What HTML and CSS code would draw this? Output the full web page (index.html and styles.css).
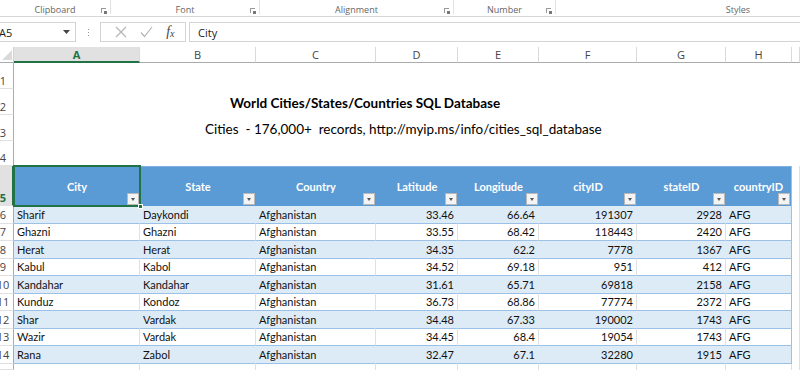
FILE: index.html
```html
<!DOCTYPE html>
<html lang="en">
<head>
  <meta charset="UTF-8" />
  <title>Cities SQL Database</title>
  <link rel="stylesheet" href="styles.css">
</head>
<body>
  <!-- Ribbon group labels -->
  <div class="ribbon">
    <div class="group g-clip"><span class="label">Clipboard</span><span class="launcher"></span></div>
    <div class="group g-font"><span class="label">Font</span><span class="launcher"></span></div>
    <div class="group g-align"><span class="label">Alignment</span><span class="launcher"></span></div>
    <div class="group g-num"><span class="label">Number</span><span class="launcher"></span></div>
    <div class="group g-styles"><span class="label">Styles</span></div>
  </div>

  <!-- Formula bar -->
  <div class="formula-bar">
    <div class="name-box">
      <span>A5</span>
      <svg class="caret" width="7" height="4" viewBox="0 0 7 4"><path d="M0 0h7L3.5 4z" fill="#444"/></svg>
    </div>
    <div class="grip"><i></i><i></i><i></i></div>
    <div class="fx-box">
      <svg width="12" height="12" viewBox="0 0 12 12"><path d="M1 1l10 10M11 1L1 11" stroke="#b5b5b5" stroke-width="1.2" fill="none"/></svg>
      <svg width="13" height="12" viewBox="0 0 13 12"><path d="M1 6.5l3.5 4L12 1" stroke="#b5b5b5" stroke-width="1.2" fill="none"/></svg>
      <span class="fx">f<sub>x</sub></span>
    </div>
    <div class="formula-input">City</div>
  </div>

  <!-- Worksheet -->
  <div class="sheet" id="sheet">
    <div class="corner"><svg width="10" height="10" viewBox="0 0 10 10"><path d="M10 0v10H0z" fill="#dadada"/></svg></div>
    <div class="ch active">A</div>
    <div class="ch">B</div>
    <div class="ch">C</div>
    <div class="ch">D</div>
    <div class="ch">E</div>
    <div class="ch">F</div>
    <div class="ch">G</div>
    <div class="ch">H</div>
    <div class="ch"></div>

    <div class="rh top"><span>1</span></div>
    <div class="blank"></div>
    <div class="rh top"><span>2</span></div>
    <div class="title-cell"><span class="title">World Cities/States/Countries SQL Database</span></div>
    <div class="rh top"><span>3</span></div>
    <div class="sub-cell"><span class="subtitle">Cities&nbsp; - 176,000+&nbsp; records, http://myip.ms/info/cities_sql_database</span></div>
    <div class="rh top"><span>4</span></div>
    <div class="blank"></div>

    <div class="rh top active"><span>5</span></div>
    <div class="th selected">City<i class="filter"></i><b class="handle"></b></div>
    <div class="th">State<i class="filter"></i></div>
    <div class="th">Country<i class="filter"></i></div>
    <div class="th">Latitude<i class="filter"></i></div>
    <div class="th">Longitude<i class="filter"></i></div>
    <div class="th">cityID<i class="filter"></i></div>
    <div class="th">stateID<i class="filter"></i></div>
    <div class="th last">countryID<i class="filter"></i></div>
    <div class="gc"></div>
  </div>

  <script>
    // Rows 6-14 of the cities table
    const cities = [
      ['Sharif', 'Daykondi', 'Afghanistan', '33.46', '66.64', '191307', '2928', 'AFG'],
      ['Ghazni', 'Ghazni', 'Afghanistan', '33.55', '68.42', '118443', '2420', 'AFG'],
      ['Herat', 'Herat', 'Afghanistan', '34.35', '62.2', '7778', '1367', 'AFG'],
      ['Kabul', 'Kabol', 'Afghanistan', '34.52', '69.18', '951', '412', 'AFG'],
      ['Kandahar', 'Kandahar', 'Afghanistan', '31.61', '65.71', '69818', '2158', 'AFG'],
      ['Kunduz', 'Kondoz', 'Afghanistan', '36.73', '68.86', '77774', '2372', 'AFG'],
      ['Shar', 'Vardak', 'Afghanistan', '34.48', '67.33', '190002', '1743', 'AFG'],
      ['Wazir', 'Vardak', 'Afghanistan', '34.45', '68.4', '19054', '1743', 'AFG'],
      ['Rana', 'Zabol', 'Afghanistan', '32.47', '67.1', '32280', '1915', 'AFG']
    ];

    const sheet = document.getElementById('sheet');

    function addCell(cls, text) {
      const div = document.createElement('div');
      div.className = cls;
      div.textContent = text;
      sheet.appendChild(div);
    }

    cities.forEach((row, i) => {
      const band = i % 2 === 0 ? ' band' : '';
      const rh = document.createElement('div');
      rh.className = 'rh';
      rh.innerHTML = '<span>' + (i + 6) + '</span>';
      sheet.appendChild(rh);
      row.forEach((val, c) => {
        let cls = 'td' + band;
        if (c >= 3 && c <= 6) cls += ' num';
        if (c === 7) cls += ' last';
        addCell(cls, val);
      });
      addCell('gc', '');
    });

    // Partial row 15 at the bottom edge
    addCell('rh', '');
    for (let c = 0; c < 9; c++) addCell('gc', '');
  </script>
</body>
</html>
```

FILE: styles.css
```css
* {
  box-sizing: border-box;
  margin: 0;
  padding: 0;
}
body {
  background: #fff;
  width: 800px;
  height: 391px;
  overflow: hidden;
  font-family: 'Lato', 'Liberation Sans', sans-serif;
  color: #000;
}

/* Ribbon */
.ribbon {
  display: flex;
  height: 17px;
  border-bottom: 1px solid #d6d6d6;
  font-family: 'Open Sans', 'Noto Sans', sans-serif;
  font-size: 9px;
  color: #666;
}
.group {
  position: relative;
  display: flex;
  align-items: center;
  justify-content: center;
  border-right: 1px solid #e2e2e2;
  margin: 0 0 2px;
  padding-top: 5px;
}
.g-clip { width: 111px; }
.g-font { width: 149px; }
.g-align { width: 194px; }
.g-num { width: 102px; }
.g-styles { flex: 1; border-right: none; padding-left: 120px; }
.launcher {
  position: absolute;
  right: 4px;
  bottom: 1px;
  width: 5px;
  height: 5px;
  border-left: 1px solid #999;
  border-top: 1px solid #999;
}
.launcher::after {
  content: '';
  position: absolute;
  right: -1px;
  bottom: -1px;
  width: 3px;
  height: 3px;
  background: #777;
}

/* Formula bar */
.formula-bar {
  display: flex;
  align-items: stretch;
  height: 20px;
  margin-top: 5px;
  font-family: 'Open Sans', 'Noto Sans', sans-serif;
  font-size: 11px;
  color: #222;
}
.name-box {
  width: 76px;
  display: flex;
  align-items: center;
  justify-content: space-between;
  padding: 0 5px 0 0;
  border: 1px solid #d4d4d4;
  border-left: none;
}
.name-box span { margin-left: -1px; }
.grip {
  width: 24px;
  display: flex;
  flex-direction: column;
  align-items: center;
  justify-content: center;
  gap: 2px;
}
.grip i {
  display: block;
  width: 1px;
  height: 1px;
  background: #999;
}
.fx-box {
  width: 86px;
  display: flex;
  align-items: center;
  justify-content: space-around;
  padding: 0 4px 0 8px;
  border: 1px solid #d4d4d4;
}
.fx {
  font-family: 'Liberation Serif', serif;
  font-style: italic;
  font-size: 14px;
  color: #444;
}
.fx sub { font-size: 10px; vertical-align: -1px; }
.formula-input {
  flex: 1;
  margin-left: 3px;
  padding-left: 8px;
  display: flex;
  align-items: center;
  border: 1px solid #d4d4d4;
  border-right: none;
}

/* Sheet grid */
.sheet {
  display: grid;
  grid-template-columns: 14px 126px 116px 120px 82px 81px 98px 89px 66px 8px;
  grid-template-rows: 16px 26px 26px 26px 25px 40px repeat(9, 17.5px) 6px;
  margin-top: 5px;
  font-size: 11px;
}
.corner {
  display: flex;
  align-items: flex-end;
  padding: 0 0 2px 2px;
  border-bottom: 1px solid #ababab;
  border-right: 1px solid #d4d4d4;
}
.ch {
  display: flex;
  align-items: center;
  justify-content: center;
  color: #444;
  font-family: 'Open Sans', 'Noto Sans', sans-serif;
  font-size: 11px;
  border-right: 1px solid #dadada;
  border-bottom: 1px solid #ababab;
}
.ch.active {
  background: #e1e1e1;
  color: #217346;
  font-weight: bold;
  border-bottom: 2px solid #217346;
}
.rh {
  overflow: hidden;
  display: flex;
  align-items: center;
  border-right: 1px solid #ababab;
  border-bottom: 1px solid #e0e0e0;
  color: #444;
  font-family: 'Open Sans', 'Noto Sans', sans-serif;
  font-size: 11px;
}
.rh span {
  display: block;
  flex: none;
  width: 22px;
  margin-left: -8px;
  text-align: center;
}
.rh.top { align-items: flex-end; padding-bottom: 0; }
.rh.active {
  background: #e1e1e1;
  color: #217346;
  font-weight: bold;
  border-right: 2px solid #217346;
}
.blank { grid-column: 2 / 11; }
.title-cell,
.sub-cell {
  grid-column: 2 / 11;
  display: flex;
  align-items: center;
  white-space: nowrap;
}
.title-cell { padding: 2px 0 0 216px; }
.sub-cell { padding: 1px 0 0 191px; }
.title {
  font-weight: bold;
  font-size: 13.5px;
}
.subtitle { font-size: 13.5px; }

/* Table header */
.th {
  position: relative;
  display: flex;
  align-items: center;
  justify-content: center;
  padding-bottom: 1px;
  background: #5b9bd5;
  color: #fff;
  font-weight: bold;
  border-top: 1px solid #7eb1e0;
}
.th.last { border-right: 1px solid #9bc2e6; }
.th.selected { outline: 2px solid #217346; outline-offset: -1px; z-index: 1; }
.filter {
  position: absolute;
  right: 1px;
  bottom: 1px;
  width: 12px;
  height: 12px;
  background: #f4f4f4;
  border: 1px solid #b9b9b9;
}
.filter::after {
  content: '';
  position: absolute;
  left: 3px;
  top: 4px;
  border-left: 2.5px solid transparent;
  border-right: 2.5px solid transparent;
  border-top: 3px solid #555;
}
.handle {
  position: absolute;
  right: -3px;
  bottom: -3px;
  width: 5px;
  height: 5px;
  background: #217346;
  border: 1px solid #fff;
}

/* Table body */
.td {
  display: flex;
  align-items: center;
  padding: 0 3px;
  white-space: nowrap;
  color: #111;
  border-right: 1px solid #e0e0e0;
  border-bottom: 1px solid #9bc2e6;
}
.td.band {
  background: #ddebf7;
  border-right-color: #ddebf7;
}
.td.num { justify-content: flex-end; }
.td.last { border-right: 1px solid #9bc2e6; }
.gc {
  border-right: 1px solid #e0e0e0;
}
```
